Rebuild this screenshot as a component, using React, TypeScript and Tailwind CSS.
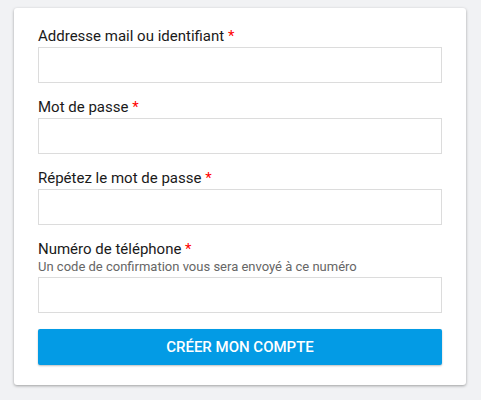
import React from 'react'

type FieldProps = { label: string; hint?: string; type?: string }

function Field({ label, hint, type = 'text' }: FieldProps) {
  return (
    <div className="flex flex-col">
      <label className="text-[15px] leading-5 text-[#1a1a1a]">
        {label} <span className="text-[#ff0000]">*</span>
      </label>
      {hint && <p className="text-[13px] leading-4 text-[#666666]">{hint}</p>}
      <input
        type={type}
        className={`${hint ? 'mt-0.5' : 'mt-px'} h-9 w-full border border-[#dcdcdc] bg-white px-2 text-[15px] outline-none`}
      />
    </div>
  )
}

export default function App() {
  return (
    <div className="min-h-[400px] bg-[#f1f2f4] pt-2 pl-[14px]" style={{ fontFamily: 'Roboto, "Liberation Sans", sans-serif' }}>
      <form className="w-[452px] rounded-[3px] bg-white px-6 pt-[18px] pb-5 shadow-[0_1px_3px_rgba(0,0,0,0.35)]">
        <div className="flex flex-col gap-3.5">
          <Field label="Addresse mail ou identifiant" />
          <Field label="Mot de passe" type="password" />
          <Field label="Répétez le mot de passe" type="password" />
          <Field label="Numéro de téléphone" hint="Un code de confirmation vous sera envoyé à ce numéro" type="tel" />
        </div>
        <button
          type="button"
          className="mt-4 h-9 w-full rounded-[2px] bg-[#039be5] text-[15px] font-medium uppercase text-white shadow-[0_1px_2px_rgba(0,0,0,0.25)]"
        >
          Créer mon compte
        </button>
      </form>
    </div>
  )
}
